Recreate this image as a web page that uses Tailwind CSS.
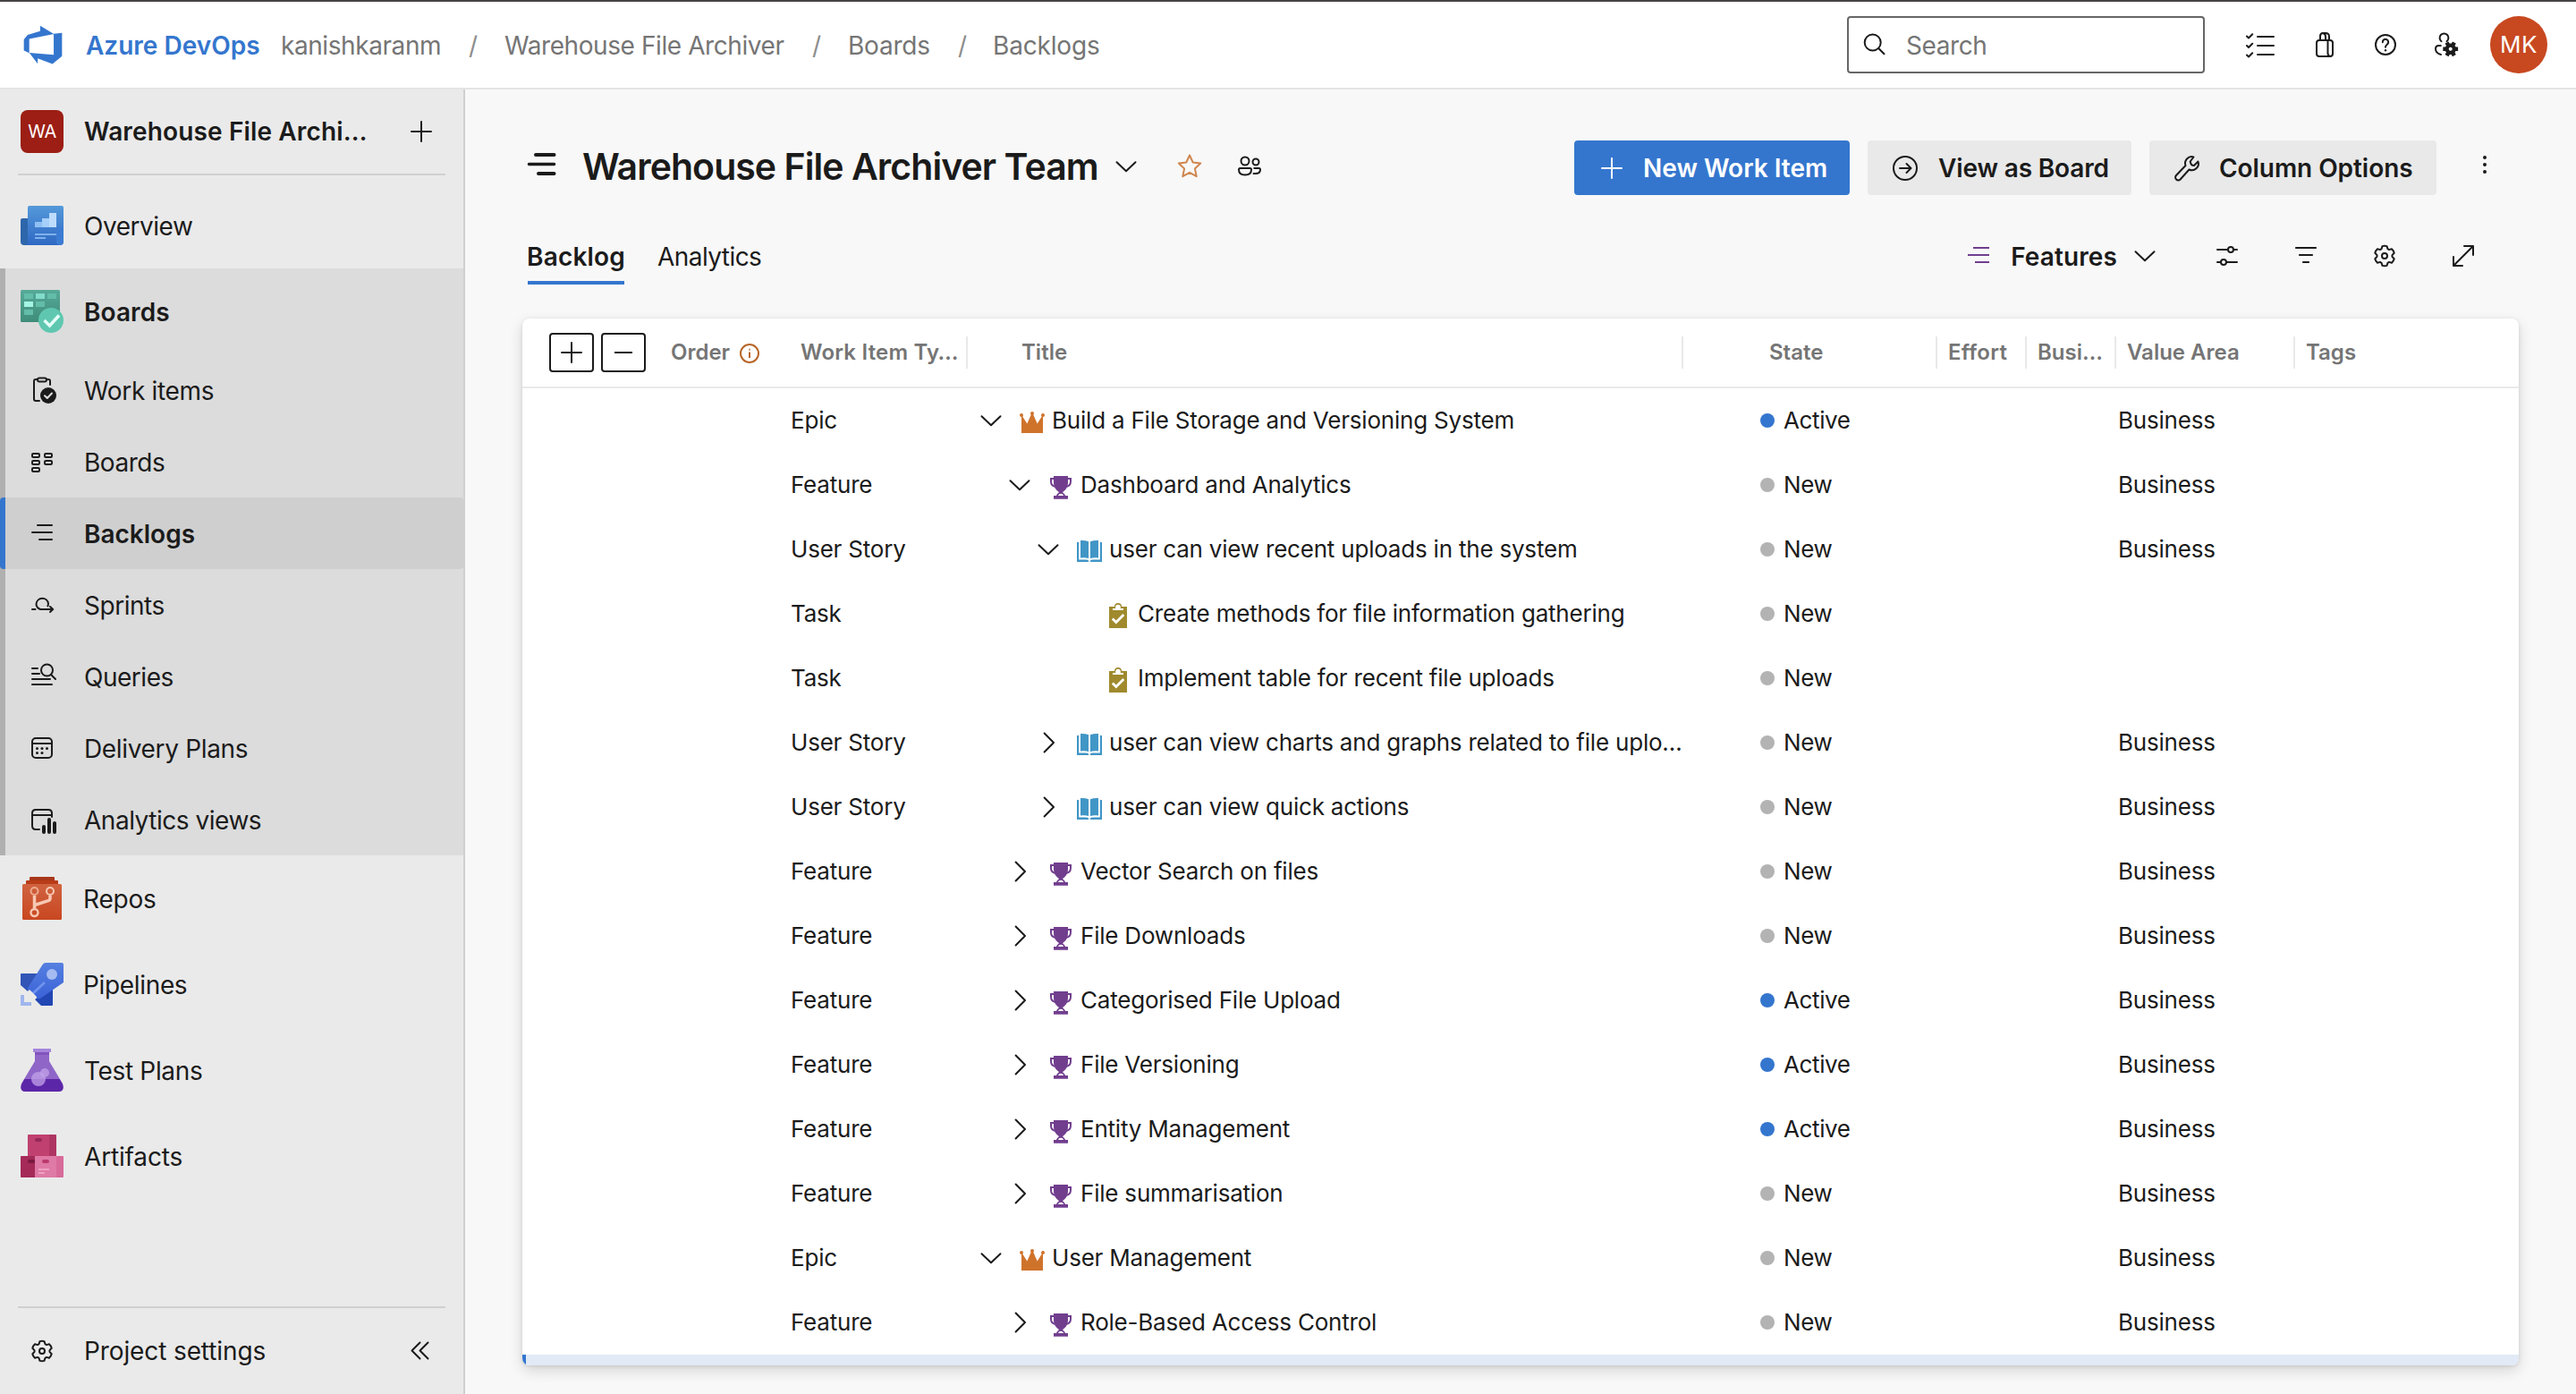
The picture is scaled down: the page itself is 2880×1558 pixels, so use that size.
<!DOCTYPE html>
<html lang="en">
<head>
<meta charset="utf-8">
<title>Warehouse File Archiver Team - Backlogs</title>
<script src="https://cdn.jsdelivr.net/npm/@tailwindcss/browser@4"></script>
</head>
<body class="h-[1558px] w-[2880px] overflow-hidden bg-[#f8f8f8] font-[Inter,sans-serif] text-[28px] leading-[40px] text-[#1b1b1b]">

<svg class="hidden">
  <symbol id="gear" viewBox="0 0 32 32"><g fill="none" stroke="currentColor" stroke-width="2" stroke-linejoin="round"><path transform="translate(16 16)" d="M-3.5-7.8-2.5-10.9Q0-11.6 2.5-10.9L3.5-7.8 5-6.9 8-7.7Q10-6 10.7-3.2L8.5-.9V.9L10.7 3.2Q10 6 8 7.7L5 6.9 3.5 7.8 2.5 10.9Q0 11.6-2.5 10.9L-3.5 7.8-5 6.9-8 7.7Q-10 6-10.7 3.2L-8.5.9V-.9L-10.7-3.2Q-10-6-8-7.7L-5-6.9z"/><circle cx="16" cy="16" r="3"/></g></symbol>
  <symbol id="down" viewBox="0 0 24 24"><path d="M1.5 7.2 12 17.2 22.500 7.2" fill="none" stroke="currentColor" stroke-width="2" stroke-linecap="round" stroke-linejoin="round"/></symbol>
  <symbol id="right" viewBox="0 0 24 24"><path d="M7.600 1.500 18 12 7.600 22.500" fill="none" stroke="currentColor" stroke-width="2" stroke-linecap="round" stroke-linejoin="round"/></symbol>
  <symbol id="plus" viewBox="0 0 24 24"><path d="M12 1v22M1 12h22" fill="none" stroke="currentColor" stroke-width="2" stroke-linecap="round"/></symbol>
  <symbol id="epic" viewBox="0 0 28 28"><g fill="#cf732b"><path d="M2 26V5.500L8.300 15.500 13.200 4.500h1.600L19.700 15.500 26 5.500V26z"/><circle cx="2" cy="6" r="2"/><circle cx="14" cy="4" r="2"/><circle cx="26" cy="6" r="2"/></g></symbol>
  <symbol id="feature" viewBox="0 0 28 28"><path d="M6 2h16v7c0 6-3 9-6 11h-4c-3-2-6-5-6-11z" fill="#713e8e"/><path d="M7 5H3v3c0 4 2.500 5.500 5 6M21 5h4v3c0 4-2.500 5.500-5 6" fill="none" stroke="#713e8e" stroke-width="2"/><path d="M12.500 19h3c.3 2 3 2.500 3.500 5h3v3.800H6V24h3c.5-2.500 3.200-3 3.500-5z" fill="#713e8e"/><path d="M11 24c.5-1.500 1.500-2.300 3-2.300s2.500.8 3 2.300z" fill="#fff"/></symbol>
  <symbol id="story" viewBox="0 0 28 28"><g fill="#4196c6"><path d="M4 2q5.500-.3 9 1.300V22q-4-1.300-9-.6zM24 2q-5.500-.3-9 1.300V22q4-1.300 9-.6z"/><path d="M0 4h2.200v19.500H10q2.500 0 3 1V26H0zM28 4h-2.200v19.500H18q-2.500 0-3 1V26h13z"/></g></symbol>
  <symbol id="task" viewBox="0 0 28 28"><path d="M4 4h6a4 4 0 0 1 8 0h6v24H4z" fill="#a08a2d"/><path d="M11.200 7V4.500a2.800 2.800 0 0 1 5.600 0V7z" fill="#fff"/><path d="M8 7h12" stroke="#fff" stroke-width="2"/><path d="M7.800 17.500l4 4L20.300 13" fill="none" stroke="#fff" stroke-width="2.800"/></symbol>
</svg>

<div class="flex h-full flex-col">
  <!-- top bar -->
  <header class="flex h-[100px] shrink-0 items-center border-t-2 border-b-2 border-t-[#464445] border-b-[#e4e4e4] bg-white pl-6 pr-8 tracking-[-0.015em] text-[#757575]">
    <svg class="size-[48px]" viewBox="0 0 18 18" fill="#3476ce"><path d="M17 4v9.740l-4 3.280-6.200-2.260V17l-3.510-4.590 10.230.8V4.440zm-3.410.49L7.850 1v2.290L2.580 4.840 1 6.870v4.610l2.260 1V6.570z"/></svg>
    <div class="flex items-center pt-[2px]">
      <a class="ml-[24px] w-[218px] font-semibold tracking-normal text-[#3476ce]">Azure DevOps</a>
      <a class="w-[210px]">kanishkaranm</a>
      <span class="w-[40px] text-[#8d8d8d]">/</span>
      <a class="w-[344px]">Warehouse File Archiver</a>
      <span class="w-[40px] text-[#8d8d8d]">/</span>
      <a class="w-[123px] tracking-[-0.008em]">Boards</a>
      <span class="w-[39px] text-[#8d8d8d]">/</span>
      <a class="tracking-[-0.006em]">Backlogs</a>
    </div>
    <div class="ml-auto flex h-16 w-[400px] items-center rounded-[4px] border-2 border-[#666] pl-4">
      <svg class="size-[28px] text-[#1b1b1b]" viewBox="0 0 28 28" fill="none" stroke="currentColor" stroke-width="2" stroke-linecap="round"><circle cx="10.700" cy="11.500" r="9"/><path d="M17.200 18 23.500 24.300"/></svg>
      <span class="ml-[20px] pt-[2px]">Search</span>
    </div>
    <div class="ml-[46px] flex items-center text-[#1b1b1b]">
      <svg class="size-8" viewBox="0 0 32 32" fill="none" stroke="currentColor" stroke-width="2" stroke-linecap="round" stroke-linejoin="round"><path d="M13 7h18M13 17h18M13 27h18M1 6.500 3 8.500 7.200 4.200M1 17l2 2 4.200-4.200M1 27.500l2 2 4.200-4.200"/></svg>
      <svg class="ml-10 size-8" viewBox="0 0 32 32" fill="none" stroke="currentColor" stroke-width="2" stroke-linejoin="round"><rect x="7" y="11" width="18" height="18" rx="3"/><path d="M19.500 11v14.500q0 3 3 3.500M11 11V6.500Q11 3 14 3h3q4 0 4 4v4M14.500 3.200Q17 4 17 7v4"/></svg>
      <svg class="ml-9 size-8" viewBox="0 0 32 32" fill="none" stroke="currentColor" stroke-width="2" stroke-linecap="round"><circle cx="16" cy="16" r="11"/><path d="M12.800 13.200a3.200 3.200 0 1 1 5.200 2.300c-1.200 1-2 1.700-2 3.300"/><circle cx="16" cy="22.300" r="1.200" fill="currentColor" stroke="none"/></svg>
      <svg class="ml-[36px] size-8" viewBox="0 0 32 32" fill="none" stroke="currentColor" stroke-width="2" stroke-linecap="round"><path d="M10.500 12.200a4.900 4.900 0 1 1 6 0M9.800 17H7.500Q4 17 4 20.500c0 3.300 2.600 5.600 6 6.500"/><g stroke-width="4.500" stroke-linecap="butt"><path d="M12.300 20.800h16.800M16.500 13.500l8.400 14.600M24.900 13.500l-8.400 14.600"/></g><circle cx="20.700" cy="20.800" r="6.200" fill="currentColor" stroke="none"/><circle cx="20.700" cy="20.800" r="2" fill="#fff" stroke="none"/></svg>
      <div class="ml-[33px] flex size-16 items-center justify-center rounded-full bg-[#c84820] text-[26px] tracking-[0.02em] text-white">MK</div>
    </div>
  </header>

  <div class="flex min-h-0 flex-1">
    <!-- navigation -->
    <nav class="flex w-[520px] shrink-0 flex-col border-r-2 border-[#cfcfcf] bg-[#eaeaea] tracking-[-0.017em]">
      <div class="mx-5 mb-2 flex h-24 shrink-0 items-center border-b-2 border-[#d0d0d0] pr-[15px] pl-[3px]">
        <div class="flex size-12 items-center justify-center rounded-[8px] bg-[#9c1e14] text-[20px] text-white">WA</div>
        <span class="ml-[23px] font-semibold tracking-[0.005em]">Warehouse File Archi…</span>
        <svg class="ml-auto size-6"><use href="#plus"/></svg>
      </div>

      <a class="flex h-24 shrink-0 items-center pl-[23px]">
        <svg class="size-12" viewBox="0 0 48 48"><defs><linearGradient id="ov" x2="0" y2="1"><stop stop-color="#5499da"/><stop offset="1" stop-color="#2f68c4"/></linearGradient></defs><path d="M0 18q0-2 2-2h8v30H4q-4 0-4-4z" fill="#2e66ab"/><path d="M8 4q0-2 2-2h36q2 0 2 2v38q0 4-4 4H4q4 0 4-4z" fill="url(#ov)"/><path d="M40 26h8v16q0 4-4 4t-4-4z" fill="#3b7bd2"/><path d="M16 20h8v6h-8z" fill="#8fc0f3"/><path d="M24 16h8v10h-8z" fill="#a6cffa"/><path d="M32 10h8v16h-8z" fill="#bddcfd"/><path d="M16 33h24v2H16zM16 37h12v2H16z" fill="#7fb2ec"/></svg>
        <span class="ml-[23px] pt-px">Overview</span>
      </a>

      <div class="border-l-[6px] border-[#b0b0b0] bg-[#dcdcdc]">
        <a class="flex h-24 items-center pl-[17px] font-semibold tracking-normal">
          <svg class="size-12" viewBox="0 0 48 48"><defs><linearGradient id="bd" x2="0" y2="1"><stop stop-color="#56aa98"/><stop offset="1" stop-color="#3f8c7a"/></linearGradient></defs><rect width="44" height="36" rx="1.500" fill="url(#bd)"/><path d="M4 4h10v6H4zM30 4h10v6H30zM17 13h10v6H17zM4 22h10v6H4z" fill="#63bda9"/><path d="M17 4h10v6H17z" fill="#83dccb"/><path d="M4 13h10v6H4z" fill="#a5f5e5"/><circle cx="34" cy="34" r="14" fill="#5fc7b0"/><path d="m26.500 34 6 6L43 28.500" fill="none" stroke="#e4fff9" stroke-width="3.500"/></svg>
          <span class="ml-[23px] pt-px tracking-[0.003em]">Boards</span>
        </a>
        <a class="flex h-20 items-center pl-[25px]">
          <svg class="size-8" viewBox="0 0 32 32" fill="none" stroke="currentColor" stroke-width="2" stroke-linecap="round" stroke-linejoin="round"><path d="M11 4H9Q7 4 7 6v20q0 2 2 2h4M21 4h2q2 0 2 2v4"/><rect x="11" y="2.500" width="10" height="4" rx="2"/><circle cx="23" cy="22" r="9" fill="currentColor" stroke="none"/><path d="m19 22.300 2.800 2.700L27 19.500" stroke="#dcdcdc"/></svg>
          <span class="ml-[31px] pt-px tracking-[-0.012em]">Work items</span>
        </a>
        <a class="flex h-20 items-center pl-[25px]">
          <svg class="size-8" viewBox="0 0 32 32" fill="none" stroke="currentColor" stroke-width="2"><rect x="5" y="7" width="8" height="4" rx="1.200"/><rect x="5" y="15" width="8" height="4" rx="1.200"/><rect x="5" y="23" width="8" height="4" rx="1.200"/><rect x="19" y="7" width="8" height="4" rx="1.200"/><rect x="19" y="15" width="8" height="4" rx="1.200"/></svg>
          <span class="ml-[31px] pt-px">Boards</span>
        </a>
        <a class="-ml-[6px] flex h-20 items-center rounded-[4px] border-l-[6px] border-[#3476ce] bg-[#cfcfcf] pl-[25px] font-semibold tracking-normal">
          <svg class="size-8" viewBox="0 0 32 32" fill="none" stroke="currentColor" stroke-width="2" stroke-linecap="round"><path d="M11 7h16M5 15h22M13 23h14"/></svg>
          <span class="ml-[31px] pt-px">Backlogs</span>
        </a>
        <a class="flex h-20 items-center pl-[25px]">
          <svg class="size-8" viewBox="0 0 32 32" fill="none" stroke="currentColor" stroke-width="2" stroke-linecap="round" stroke-linejoin="round"><path d="M5 21h3.500M14 21q-4.500-2-4.500-6a6.800 6.800 0 0 1 13.500-.4q0 1.400-.6 2.800M14 21h14M25 18l3.200 3-3.200 3"/></svg>
          <span class="ml-[31px] pt-px">Sprints</span>
        </a>
        <a class="flex h-20 items-center pl-[25px]">
          <svg class="size-8" viewBox="0 0 32 32" fill="none" stroke="currentColor" stroke-width="2" stroke-linecap="round"><path d="M5 7h6M5 13h8M5 19h20M5 25h22M26 14l5 5"/><circle cx="21.500" cy="9" r="6.500"/></svg>
          <span class="ml-[31px] pt-px">Queries</span>
        </a>
        <a class="flex h-20 items-center pl-[25px]">
          <svg class="size-8" viewBox="0 0 32 32" fill="none" stroke="currentColor" stroke-width="2"><rect x="5" y="5" width="22" height="22" rx="4"/><path d="M5 11h22"/><g fill="currentColor" stroke="none"><circle cx="10.500" cy="16.500" r="1.500"/><circle cx="16" cy="16.500" r="1.500"/><circle cx="21.500" cy="16.500" r="1.500"/><circle cx="10.500" cy="21.500" r="1.500"/><circle cx="16" cy="21.500" r="1.500"/></g></svg>
          <span class="ml-[31px] pt-px tracking-[-0.012em]">Delivery Plans</span>
        </a>
        <a class="flex h-20 items-center pl-[25px]">
          <svg class="size-8" viewBox="0 0 32 32" fill="none" stroke="currentColor" stroke-width="2" stroke-linecap="round"><path d="M13 27H9q-4 0-4-4V9q0-4 4-4h14q4 0 4 4v4M5 11h22"/><path d="M18 24v6M24 16v14M30 20v10" stroke-width="4"/></svg>
          <span class="ml-[31px] pt-px">Analytics views</span>
        </a>
      </div>

      <a class="flex h-24 shrink-0 items-center pl-[23px]">
        <svg class="size-12" viewBox="0 0 48 48"><defs><linearGradient id="rp" x2="0" y2="1"><stop stop-color="#d06340"/><stop offset="1" stop-color="#c94720"/></linearGradient></defs><path d="M10 1q0-1 1-1h26q1 0 1 1v6H10z" fill="#a8371a"/><path d="M6 5q0-1 1-1h34q1 0 1 1v6H6z" fill="#b93c17"/><rect x="2" y="8" width="44" height="40" rx="1.500" fill="url(#rp)"/><g fill="none" stroke="#f7c8b2"><path d="M15.500 21v14M33 21v3q0 2-2 2.700L17.500 31q-2 .8-2 3" stroke-width="3.500"/><circle cx="15.500" cy="16" r="4" stroke="#eda98c" stroke-width="2"/><circle cx="33" cy="16" r="4" stroke-width="2"/><circle cx="15.500" cy="40" r="4" stroke-width="2.400"/></g></svg>
        <span class="ml-[22px] pt-px tracking-[-0.008em]">Repos</span>
      </a>
      <a class="flex h-24 shrink-0 items-center pl-[23px]">
        <svg class="size-12" viewBox="0 0 48 48"><defs><linearGradient id="pl" x2="0" y2="1"><stop stop-color="#5580e0"/><stop offset="1" stop-color="#3b62d8"/></linearGradient></defs><path d="M1 12h20L8 32 0 25V13q0-1 1-1z" fill="#3156b8"/><path d="M36 26v21q0 1-1 1H23l-7-7z" fill="#2247b4"/><path d="M28 0h18q2 0 2 2v20L22 40q-2 .8-3-.2L8.500 30q-1-1 0-2.500L24 3q1.500-3 4-3z" fill="url(#pl)"/><path d="m12 34 14-13 2 2-14 13z" fill="#6d93ee"/><circle cx="35" cy="13" r="6" fill="#a5bbf2"/><path d="M0 36h4v8h8v4H0z" fill="#9fb6ee"/><path d="m10 30 8 8-2 3-2.500-2-2 2.500-3-3 2-2.500L8 33z" fill="#eaeaea"/></svg>
        <span class="ml-[22px] pt-px tracking-[-0.012em]">Pipelines</span>
      </a>
      <a class="flex h-24 shrink-0 items-center pl-[23px]">
        <svg class="size-12" viewBox="0 0 48 48"><path d="M16 3h16v11l15 25q2.500 9-5 9H6q-7.500 0-5-9l15-25z" fill="#8f66c8"/><path d="M4.500 34h39L47 40q2.500 8-5 8H6q-7.500 0-5-8z" fill="#5c26a8"/><path d="M14 0h20v4H14z" fill="#a585dc"/><path d="M16 4h16v3H16z" fill="#8253bd"/><circle cx="20" cy="34" r="8" fill="#c3a3ea" fill-opacity=".75"/><circle cx="27" cy="27" r="5" fill="#c3a3ea" fill-opacity=".75"/></svg>
        <span class="ml-[23px] pt-px tracking-[-0.012em]">Test Plans</span>
      </a>
      <a class="flex h-24 shrink-0 items-center pl-[23px]">
        <svg class="size-12" viewBox="0 0 48 48"><path d="M8 1q0-1 1-1h23v24H8z" fill="#c0406f"/><path d="M32 0h7q1 0 1 1v23h-8z" fill="#ae3562"/><rect x="16" y="4" width="8" height="4" rx="2" fill="#97295a"/><path d="M0 25q0-1 1-1h15v24H1q-1 0-1-1z" fill="#a52a58"/><path d="M16 28h-6a2 2 0 0 0 0 4h6z" fill="#7c1a41"/><path d="M16 24h24v24H16z" fill="#df79a5"/><path d="M40 24h7q1 0 1 1v22q0 1-1 1h-7z" fill="#d86a9a"/><rect x="24" y="28" width="8" height="4" rx="2" fill="#bb3a6c"/><path d="M20 38h12v2H20zM20 42h7v2h-7z" fill="#eda0c2"/></svg>
        <span class="ml-[23px] pt-px tracking-[-0.006em]">Artifacts</span>
      </a>

      <div class="mx-5 mt-auto flex h-[98px] shrink-0 items-center border-t-2 border-[#d0d0d0] pr-[17px] pl-[11px]">
        <svg class="size-8"><use href="#gear"/></svg>
        <span class="ml-[31px] tracking-[-0.004em]">Project settings</span>
        <svg class="ml-auto size-6" viewBox="0 0 24 24" fill="none" stroke="currentColor" stroke-width="2" stroke-linecap="round" stroke-linejoin="round"><path d="M12.500 2.500 3.500 11.500l9 9M21.500 2.500 12.500 11.500l9 9"/></svg>
      </div>
    </nav>

    <!-- page -->
    <main class="flex flex-1 flex-col pr-16 pl-16">
      <div class="mt-14 flex h-[64px] items-center pl-[1px]">
        <div class="flex items-center pb-[4px]">
          <svg class="size-[40px]" viewBox="0 0 40 40" fill="none" stroke="currentColor" stroke-width="4" stroke-linecap="round"><path d="M14 7h20.500M17 28h17.500"/><path d="M6.500 17.500h28" stroke-width="3.500"/></svg>
          <h1 class="ml-[26px] text-[41px] font-semibold tracking-[-0.023em]">Warehouse File Archiver Team</h1>
          <svg class="ml-[19px] size-[24px]"><use href="#down"/></svg>
          <svg class="ml-[43px] size-8 text-[#cf8650]" viewBox="0 0 32 32" fill="none" stroke="currentColor" stroke-width="2" stroke-linejoin="round"><path d="m16 3.500 3.700 8 8.500 1-6.300 5.900 1.800 8.800-7.700-4.400-7.700 4.400 1.800-8.800L3.800 12.500l8.500-1z"/></svg>
          <svg class="ml-[35px] size-8" viewBox="0 0 32 32" fill="none" stroke="currentColor" stroke-width="2"><circle cx="11" cy="10" r="4.500"/><circle cx="23" cy="11" r="3.500"/><path d="M5.500 18h11q1.500 0 1.500 1.500c0 4-3 6-7 6s-7-2-7-6Q4 18 5.500 18zM20.500 18h6q1.500 0 1.500 1.500c0 3-2.500 4.500-5.500 4.500-1 0-2 0-2.700-.4"/></svg>
        </div>
        <div class="ml-auto flex items-center gap-5 pb-px font-semibold">
          <a class="flex h-[61px] w-[308px] items-center rounded-[4px] bg-[#3476ce] pl-[30px] text-white"><svg class="size-6"><use href="#plus"/></svg><span class="ml-[23px]">New Work Item</span></a>
          <a class="flex h-[61px] w-[295px] items-center rounded-[4px] bg-[#e9e9e9] pl-[26px]">
            <svg class="size-8" viewBox="0 0 32 32" fill="none" stroke="currentColor" stroke-width="2" stroke-linecap="round" stroke-linejoin="round"><circle cx="16" cy="16" r="13"/><path d="M10 16h12M17.500 11l5 5-5 5"/></svg><span class="ml-[21px] tracking-[-0.005em]">View as Board</span></a>
          <a class="flex h-[61px] w-[321px] items-center rounded-[4px] bg-[#e9e9e9] pl-[26px]">
            <svg class="size-8" viewBox="0 0 32 32" fill="none" stroke="currentColor" stroke-width="2" stroke-linejoin="round"><path d="M23.500 3.500a7.300 7.300 0 0 0-9 9.500L4 24a3.200 3.200 0 0 0 4.600 4.500L18.500 17.500a7.300 7.300 0 0 0 10-9L24 13q-3.500.3-4.300-4.500z"/></svg><span class="ml-[20px] tracking-[-0.002em]">Column Options</span></a>
        </div>
        <svg class="mr-[22px] ml-[38px] size-8" viewBox="0 0 32 32" fill="currentColor"><circle cx="16" cy="4" r="2"/><circle cx="16" cy="12" r="2"/><circle cx="16" cy="20" r="2"/></svg>
      </div>

      <div class="mt-[40px] flex h-[58px] items-start pl-[6px]">
        <a class="flex h-[58px] w-[108px] items-start justify-center border-b-4 border-[#3476ce] pt-[7px] font-semibold tracking-[0.006em]">Backlog</a>
        <a class="ml-[37px] pt-[7px] tracking-[-0.02em]">Analytics</a>
        <div class="mt-[10px] mr-[46px] ml-auto flex h-8 items-center">
          <svg class="size-8 text-[#713e8e]" viewBox="0 0 32 32" fill="none" stroke="currentColor" stroke-width="2.200"><path d="M10 7h18M4 15h24M12 23h16"/></svg>
          <span class="ml-[20px] pt-px font-semibold tracking-[0.004em]">Features</span>
          <svg class="ml-[19px] size-6"><use href="#down"/></svg>
          <svg class="ml-[64px] size-8" viewBox="0 0 32 32" fill="none" stroke="currentColor" stroke-width="2" stroke-linecap="round"><path d="M5 9h11M23 9h4M5 23h4M15 23h12"/><circle cx="20" cy="9" r="3"/><circle cx="12" cy="23" r="3"/></svg>
          <svg class="ml-14 size-8" viewBox="0 0 32 32" fill="none" stroke="currentColor" stroke-width="2.200" stroke-linecap="round"><path d="M5 7h22M9 15h14M13 23h6"/></svg>
          <svg class="ml-14 size-8"><use href="#gear"/></svg>
          <svg class="ml-14 size-8" viewBox="0 0 32 32" fill="none" stroke="currentColor" stroke-width="2" stroke-linecap="round" stroke-linejoin="round"><path d="M17 5h10v10M27 5 5 27M5 17v10h10"/></svg>
        </div>
      </div>

      <!-- backlog grid -->
      <section class="mt-[38px] overflow-hidden rounded-[8px] bg-white shadow-[0_6px_16px_rgba(0,0,0,0.14),0_1px_4px_rgba(0,0,0,0.1)]">
        <div class="grid h-[78px] grid-cols-[300px_198px_800px_284px_100px_100px_200px_1fr] items-center border-b-2 border-[#e9e9e9] text-2xl leading-9 font-semibold text-[#757575]">
          <div class="flex items-center pl-[30px] text-[#1b1b1b]">
            <span class="flex h-[44px] w-[50px] items-center justify-center rounded-[4px] border-2 border-[#1b1b1b]"><svg class="size-6"><use href="#plus"/></svg></span>
            <span class="ml-2 flex h-[44px] w-[50px] items-center justify-center rounded-[4px] border-2 border-[#1b1b1b]"><span class="h-[2px] w-5 bg-[#1b1b1b]"></span></span>
            <span class="ml-[28px] text-[#757575]">Order</span>
            <svg class="ml-[10px] size-6" viewBox="0 0 24 24" fill="none" stroke="#b8662a" stroke-width="2"><circle cx="12" cy="13" r="10"/><path d="M12 11.500V18"/><path d="M12 7.500v2.500" stroke="#dba67f"/></svg>
          </div>
          <div class="border-r-2 border-[#e9e9e9] pl-[11px] tracking-[0.008em]">Work Item Ty…</div>
          <div class="border-r-2 border-[#e9e9e9] pl-[60px]">Title</div>
          <div class="border-r-2 border-[#e9e9e9] pl-[96px]">State</div>
          <div class="border-r-2 border-[#e9e9e9] pl-3 tracking-[0.01em]">Effort</div>
          <div class="border-r-2 border-[#e9e9e9] pl-3">Busi…</div>
          <div class="border-r-2 border-[#e9e9e9] pl-3">Value Area</div>
          <div class="pl-3">Tags</div>
        </div>
        <div id="rows" class="text-[26px] tracking-[-0.008em]"></div>
        <div class="h-3 border-l-4 border-[#3476ce] bg-[#e1eaf6]"></div>
      </section>
    </main>
  </div>
</div>

<script>
  const names = { epic: 'Epic', feature: 'Feature', story: 'User Story', task: 'Task' };
  const levels = { epic: 0, feature: 32, story: 64, task: 96 };
  // kind, expander, title, state
  const items = [
    ['epic', 'down', 'Build a File Storage and Versioning System', 'Active'],
    ['feature', 'down', 'Dashboard and Analytics', 'New'],
    ['story', 'down', 'user can view recent uploads in the system', 'New'],
    ['task', '', 'Create methods for file information gathering', 'New'],
    ['task', '', 'Implement table for recent file uploads', 'New'],
    ['story', 'right', 'user can view charts and graphs related to file uplo…', 'New'],
    ['story', 'right', 'user can view quick actions', 'New'],
    ['feature', 'right', 'Vector Search on files', 'New'],
    ['feature', 'right', 'File Downloads', 'New'],
    ['feature', 'right', 'Categorised File Upload', 'Active'],
    ['feature', 'right', 'File Versioning', 'Active'],
    ['feature', 'right', 'Entity Management', 'Active'],
    ['feature', 'right', 'File summarisation', 'New'],
    ['epic', 'down', 'User Management', 'New'],
    ['feature', 'right', 'Role-Based Access Control', 'New'],
  ];
  document.getElementById('rows').innerHTML = items.map(([kind, exp, title, state]) => `
    <div class="grid h-[72px] grid-cols-[300px_212px_786px_486px_1fr] items-center">
      <span></span>
      <span>${names[kind]}</span>
      <div class="flex items-center" style="padding-left:${levels[kind]}px">
        <svg class="size-6">${exp ? `<use href="#${exp}"/>` : ''}</svg>
        <svg class="mt-1 ml-5 size-7"><use href="#${kind}"/></svg>
        <span class="ml-2 whitespace-nowrap">${title}</span>
      </div>
      <div class="flex items-center pl-[86px]">
        <span class="size-4 rounded-full ${state === 'Active' ? 'bg-[#3476ce]' : 'bg-[#b3b3b3]'}"></span>
        <span class="ml-[10px] tracking-[-0.015em]">${state}</span>
      </div>
      <span>${kind === 'task' ? '' : 'Business'}</span>
    </div>`).join('');
</script>
</body>
</html>
